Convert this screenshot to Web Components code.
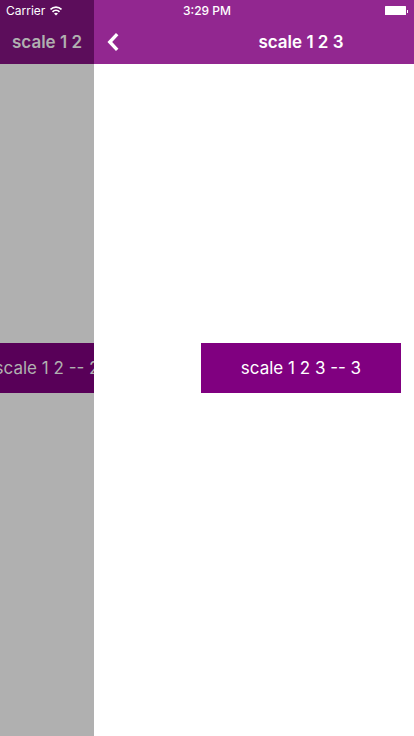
<!DOCTYPE html>
<html lang="en">
<head>
<meta charset="utf-8">
<meta name="viewport" content="width=device-width, initial-scale=1">
<title>scale 1 2 3</title>
<style>
html, body { margin: 0; height: 100%; }
body { font-family: Inter, "Liberation Sans", sans-serif; overflow: hidden; }
</style>
</head>
<body>
<nav-transition>
  <status-bar slot="status" carrier="Carrier" time="3:29 PM"></status-bar>
  <app-screen slot="back" class="previous" heading="scale 1 2" dimmed>
    <scale-button>scale 1 2 -- 2</scale-button>
  </app-screen>
  <app-screen slot="front" heading="scale 1 2 3" back>
    <scale-button>scale 1 2 3 -- 3</scale-button>
  </app-screen>
</nav-transition>
<script>
const attach = (host, html) => {
  host.attachShadow({ mode: 'open' }).innerHTML = html;
  return host.shadowRoot;
};

// Two screens during a push: the front one slides over the dimmed one.
customElements.define('nav-transition', class extends HTMLElement {
  constructor() {
    super();
    attach(this, `
      <style>
        :host { display: grid; grid-template-columns: 94px minmax(0, 1fr); min-height: 100vh; position: relative; overflow: hidden; background: #fff; }
        .pane { display: grid; overflow: hidden; }
        .front { grid-template-columns: 100vw; }
        .back { grid-template-columns: minmax(0, 1fr); }
        .status { position: absolute; inset: 0 0 auto 0; }
      </style>
      <div class="pane back"><slot name="back"></slot></div>
      <main class="pane front"><slot name="front"></slot></main>
      <div class="status"><slot name="status"></slot></div>`);
  }
});

customElements.define('status-bar', class extends HTMLElement {
  constructor() {
    super();
    const root = attach(this, `
      <style>
        :host { display: grid; grid-template-columns: 1fr auto 1fr; align-items: center; height: 20px; padding: 0 6px; color: #fff; font-size: 12px; line-height: 20px; }
        .left { display: flex; align-items: center; gap: 5px; }
        .carrier, .time { padding-top: 1px; }
        .time { font-weight: 500; }
        .battery { justify-self: end; }
        svg { display: block; }
      </style>
      <div class="left">
        <span class="carrier"></span>
        <svg width="12" height="10" viewBox="0 0 12 10" fill="none" stroke="#fff" stroke-width="1.7" aria-hidden="true">
          <path d="M.5 3.500C3.500.3 8.500.3 11.500 3.500M2.500 5.800C4.500 3.900 7.500 3.900 9.500 5.800"/>
          <path d="M6 9.500 4 7.500Q6 6.100 8 7.500Z" fill="#fff" stroke="none"/>
        </svg>
      </div>
      <span class="time"></span>
      <svg class="battery" width="24" height="10" viewBox="0 0 24 10" fill="#fff" aria-hidden="true">
        <rect x="1" width="21" height="9" rx=".5"/><rect x="23" y="4" width="1" height="3"/>
      </svg>`);
    root.querySelector('.carrier').textContent = this.getAttribute('carrier');
    root.querySelector('.time').textContent = this.getAttribute('time');
  }
});

customElements.define('app-screen', class extends HTMLElement {
  constructor() {
    super();
    const root = attach(this, `
      <style>
        :host { --bar: #922790; --button: #800080; --ink: #fff; display: grid; grid-template-rows: 64px 1fr; grid-template-columns: minmax(0, 1fr); background: #fff; }
        :host([dimmed]) { --bar: #5c0d5b; --button: #580058; --ink: #b0b0b0; background: #b0b0b0; }
        header { display: grid; grid-template-columns: 1fr auto 1fr; grid-template-rows: 44px; align-items: center; padding-top: 20px; background: var(--bar); color: var(--ink); }
        h1 { grid-area: 1 / 2; margin: 0; font-size: 17px; line-height: 22px; font-weight: 600; white-space: nowrap; }
        button { grid-area: 1 / 1; justify-self: start; padding: 0 13px; height: 44px; border: 0; background: none; color: inherit; }
        svg { display: block; }
        .content { display: flex; align-items: center; justify-content: center; padding-bottom: 64px; }
      </style>
      <header>
        <h1></h1>
      </header>
      <div class="content"><slot></slot></div>`);
    root.querySelector('h1').textContent = this.getAttribute('heading');
    if (this.hasAttribute('back')) {
      root.querySelector('header').insertAdjacentHTML('afterbegin', `
        <button type="button" aria-label="Back">
          <svg width="12" height="18" viewBox="0 0 12 18" fill="none" stroke="currentColor" stroke-width="3.4" aria-hidden="true"><path d="M10.200 1.200 2.800 9l7.400 7.800"/></svg>
        </button>`);
    }
  }
});

customElements.define('scale-button', class extends HTMLElement {
  constructor() {
    super();
    attach(this, `
      <style>
        :host { display: block; flex: none; }
        button { display: block; width: 200px; height: 50px; padding: 0; border: 0; background: var(--button); color: var(--ink); font: 400 17px/24px Inter, "Liberation Sans", sans-serif; white-space: nowrap; }
      </style>
      <button type="button"><slot></slot></button>`);
  }
});
</script>
</body>
</html>
